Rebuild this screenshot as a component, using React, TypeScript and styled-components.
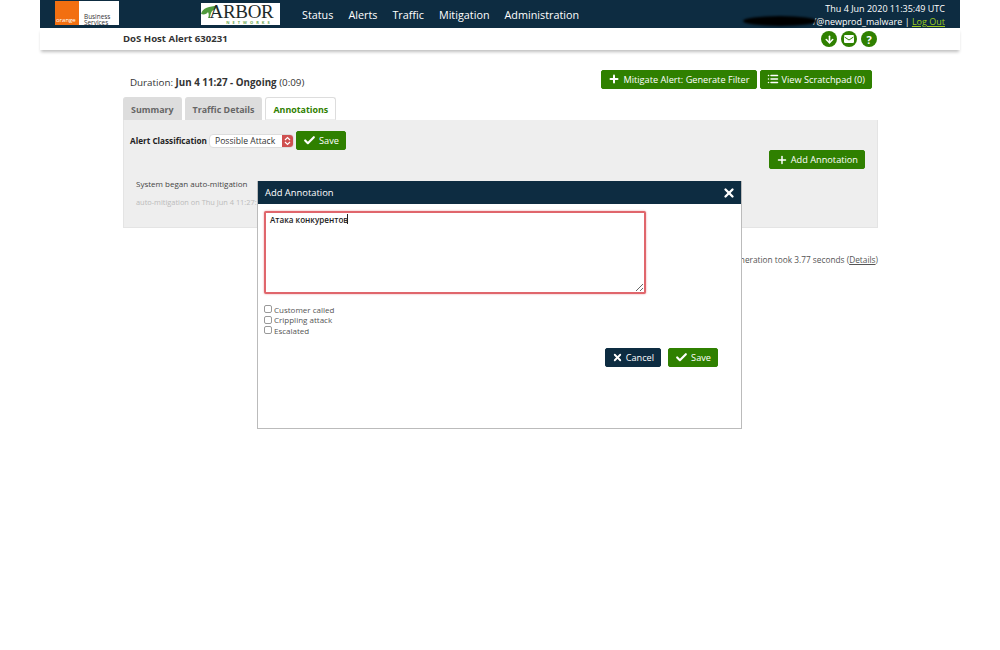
import React from 'react'
import styled, { createGlobalStyle } from 'styled-components'
import { ArrowDown, Check, List, Plus, X } from 'lucide-react'

const GlobalStyle = createGlobalStyle`
	html, body {
		margin: 0;
		padding: 0;
		background: #fff;
		font-family: "Open Sans", "Noto Sans", sans-serif;
		color: #333;
	}
`

const navItems = ['Status', 'Alerts', 'Traffic', 'Mitigation', 'Administration']
const tabs = ['Summary', 'Traffic Details', 'Annotations']
const flags = ['Customer called', 'Crippling attack', 'Escalated']

const App: React.FC = () => {
	return (
		<Page>
			<GlobalStyle />
			<Header>
				<OrangeLogo>
					<OrangeSquare>orange</OrangeSquare>
					<BusinessText>Business<br />Services</BusinessText>
				</OrangeLogo>
				<ArborLogo>
					<ArborName>
						<svg width="18" height="13" viewBox="0 0 18 13">
							<path d="M17 1C10 1 2 3 1 9c3 1 6 0 7-2 1 2 1 4 0 6h2c0-3 1-5 2-7 3-1 4-3 5-5z" fill="#4f9a3c" />
						</svg>
						ARBOR
					</ArborName>
					<ArborSub>NETWORKS</ArborSub>
				</ArborLogo>
				<Nav>
					{navItems.map(item => <NavItem key={item}>{item}</NavItem>)}
				</Nav>
				<UserInfo>
					<div>Thu 4 Jun 2020 11:35:49 UTC</div>
					<UserLine>
						<Redacted />
						<span>/@newprod_malware&nbsp;|&nbsp;</span>
						<LogOut>Log Out</LogOut>
					</UserLine>
				</UserInfo>
			</Header>
			<SubHeader>
				<PageTitle>DoS Host Alert 630231</PageTitle>
				<RoundIcons>
					<RoundIcon><ArrowDown size={11} strokeWidth={3.5} /></RoundIcon>
					<RoundIcon>
						<svg width="10" height="8" viewBox="0 0 10 8">
							<rect width="10" height="8" rx="1.2" fill="#fff" />
							<path d="M0.5 2l4.5 3 4.5-3" fill="none" stroke="#2f8000" strokeWidth="1" />
						</svg>
					</RoundIcon>
					<RoundIcon><b>?</b></RoundIcon>
				</RoundIcons>
			</SubHeader>
			<Content>
				<TopRow>
					<Duration>Duration: <b>Jun 4 11:27 - Ongoing</b> (0:09)</Duration>
					<TopActions>
						<GreenButton><Plus size={12} strokeWidth={4} />Mitigate Alert: Generate Filter</GreenButton>
						<GreenButton><List size={12} strokeWidth={3} />View Scratchpad (0)</GreenButton>
					</TopActions>
				</TopRow>
				<Tabs>
					{tabs.map(tab => <Tab key={tab} $active={tab === 'Annotations'}>{tab}</Tab>)}
				</Tabs>
				<Panel>
					<ClassRow>
						<ClassLabel>Alert Classification</ClassLabel>
						<FakeSelect>
							Possible Attack
							<SelectArrows>
								<svg width="7" height="10" viewBox="0 0 7 10" fill="none" stroke="#fff" strokeWidth="1.2">
									<path d="M1 4l2.5-2.5L6 4M1 6l2.5 2.5L6 6" />
								</svg>
							</SelectArrows>
						</FakeSelect>
						<GreenButton><Check size={13} strokeWidth={4} />Save</GreenButton>
					</ClassRow>
					<AddRow>
						<GreenButton><Plus size={12} strokeWidth={3} />Add Annotation</GreenButton>
					</AddRow>
					<NoteText>System began auto-mitigation</NoteText>
					<NoteMeta>auto-mitigation on Thu Jun 4 11:27:13 2020</NoteMeta>
				</Panel>
				<Footnote>Page generation took 3.77 seconds (<u>Details</u>)</Footnote>
			</Content>
			<Modal>
				<ModalHeader>
					Add Annotation
					<X size={14} strokeWidth={4} color="#fff" />
				</ModalHeader>
				<ModalBody>
					<NoteField>
						<NoteInput defaultValue="Атака конкурентов" />
						<Caret />
					</NoteField>
					<Flags>
						{flags.map(flag => (
							<FlagRow key={flag}>
								<FlagBox type="checkbox" />
								{flag}
							</FlagRow>
						))}
					</Flags>
					<ModalActions>
						<NavyButton><X size={11} strokeWidth={4} />Cancel</NavyButton>
						<GreenButton><Check size={13} strokeWidth={4} />Save</GreenButton>
					</ModalActions>
				</ModalBody>
			</Modal>
		</Page>
	)
}

const Page = styled.div`
	position: relative;
	width: 1000px;
	height: 650px;
	overflow: hidden;
	padding: 0 40px;
	box-sizing: border-box;
`

const Header = styled.div`
	display: flex;
	align-items: flex-start;
	height: 28px;
	background: #0d2c41;
	padding-left: 15px;
	padding-right: 15px;
	color: #fff;
`

const OrangeLogo = styled.div`
	display: flex;
	width: 64px;
	height: 24px;
	margin-top: 1px;
	background: #fff;
`

const OrangeSquare = styled.div`
	width: 24px;
	background: #f26f10;
	color: #fff;
	font-size: 6px;
	line-height: 6px;
	padding: 16px 0 0 1px;
	box-sizing: border-box;
`

const BusinessText = styled.div`
	margin: 13px 0 0 5px;
	color: #333;
	font-size: 6.4px;
	line-height: 6px;
	white-space: nowrap;
`

const ArborLogo = styled.div`
	width: 79px;
	height: 22px;
	margin: 3px 0 0 82px;
	background: #fff;
	text-align: center;
`

const ArborName = styled.div`
	display: flex;
	justify-content: center;
	align-items: center;
	height: 17px;
	font-family: "Liberation Serif", serif;
	font-size: 19px;
	letter-spacing: -0.3px;
	line-height: 17px;
	color: #1d2a2a;
	svg {
		margin-right: -8px;
		margin-left: -8px;
	}
`

const ArborSub = styled.div`
	font-size: 4px;
	font-weight: 700;
	line-height: 5px;
	letter-spacing: 3px;
	padding-left: 18px;
	color: #6aa84f;
`

const Nav = styled.div`
	display: flex;
	gap: 15px;
	margin-left: 22px;
	line-height: 29px;
	font-size: 10.8px;
	font-weight: 500;
`

const NavItem = styled.div`
	color: #fff;
`

const UserInfo = styled.div`
	margin-left: auto;
	font-size: 9px;
	line-height: 13px;
	padding-top: 2px;
	text-align: right;
	white-space: nowrap;
`

const UserLine = styled.div`
	position: relative;
	display: flex;
	justify-content: flex-end;
`

const Redacted = styled.div`
	position: absolute;
	right: 128px;
	top: 1px;
	width: 74px;
	height: 10px;
	border-radius: 50%;
	background: #000;
	filter: blur(1px);
`

const LogOut = styled.span`
	color: #9ecb1e;
	text-decoration: underline;
`

const SubHeader = styled.div`
	display: flex;
	justify-content: space-between;
	height: 22px;
	padding: 0 83px 0 83px;
	background: #fff;
	box-shadow: 0 3px 3px -1px rgba(0, 0, 0, 0.25);
`

const PageTitle = styled.div`
	font-size: 9.6px;
	font-weight: 700;
	line-height: 21px;
	color: #333;
`

const RoundIcons = styled.div`
	display: flex;
	gap: 4px;
	padding-top: 3px;
`

const RoundIcon = styled.div`
	display: flex;
	align-items: center;
	justify-content: center;
	width: 16px;
	height: 16px;
	border-radius: 50%;
	background: #2f8000;
	color: #fff;
	font-size: 11px;
`

const Content = styled.div`
	padding: 19px 82px 0 83px;
`

const TopRow = styled.div`
	display: flex;
	justify-content: space-between;
	align-items: center;
	height: 20px;
	padding-left: 7px;
`

const Duration = styled.div`
	font-size: 9.8px;
	padding-top: 7px;
	color: #333;
`

const TopActions = styled.div`
	display: flex;
	gap: 3px;
	margin-right: 6px;
`

const GreenButton = styled.button`
	display: inline-flex;
	align-items: center;
	gap: 3px;
	height: 19px;
	padding: 0 6px;
	border: 1px solid #2f8000;
	border-radius: 2px;
	background: #2f8000;
	color: #fff;
	font-family: inherit;
	font-size: 9.2px;
	font-weight: 400;
	white-space: nowrap;
`

const NavyButton = styled(GreenButton)`
	background: #0d2c41;
	border-color: #0d2c41;
`

const Tabs = styled.div`
	display: flex;
	gap: 3px;
	margin-top: 8px;
`

const Tab = styled.div<{ $active?: boolean }>`
	height: 23px;
	padding: 0 7px;
	box-sizing: border-box;
	border: 1px solid #ddd;
	border-bottom: ${p => (p.$active ? '1px solid #eee' : 'none')};
	border-radius: 3px 3px 0 0;
	background: ${p => (p.$active ? '#fff' : '#ddd')};
	color: ${p => (p.$active ? '#2f8000' : '#666')};
	font-size: 8.9px;
	font-weight: 700;
	line-height: 24px;
`

const Panel = styled.div`
	height: 108px;
	box-sizing: border-box;
	padding: 11px 12px 0 6px;
	background: #eee;
	border: 1px solid #e4e4e4;
	border-top: none;
`

const ClassRow = styled.div`
	display: flex;
	align-items: center;
	gap: 2px;
`

const ClassLabel = styled.div`
	font-size: 8.2px;
	font-weight: 700;
	color: #222;
`

const FakeSelect = styled.div`
	display: flex;
	align-items: center;
	justify-content: space-between;
	width: 85px;
	height: 14px;
	box-sizing: border-box;
	padding-left: 5px;
	border-radius: 4px;
	background: #fff;
	border: 1px solid #ddd;
	font-size: 8.6px;
	color: #333;
	overflow: hidden;
`

const SelectArrows = styled.div`
	display: flex;
	align-items: center;
	justify-content: center;
	width: 11px;
	height: 14px;
	background: #cf5050;
`

const AddRow = styled.div`
	display: flex;
	justify-content: flex-end;
	margin-top: 0;
`

const NoteText = styled.div`
	margin: 9px 0 0 6px;
	font-size: 8px;
	color: #444;
`

const NoteMeta = styled.div`
	margin: 8px 0 0 6px;
	font-size: 7.4px;
	color: #bbb;
`

const Footnote = styled.div`
	margin-top: 26px;
	text-align: right;
	font-size: 8.3px;
	color: #555;
`

const Modal = styled.div`
	position: absolute;
	left: 257px;
	top: 181px;
	width: 485px;
	height: 248px;
	box-sizing: border-box;
	background: #fff;
	border: 1px solid #bbb;
	border-top: none;
`

const ModalHeader = styled.div`
	display: flex;
	align-items: center;
	justify-content: space-between;
	height: 23px;
	padding: 0 5px 0 7px;
	background: #0d2c41;
	color: #fff;
	font-size: 9.4px;
	font-weight: 500;
`

const ModalBody = styled.div`
	padding: 7px 0 0 6px;
`

const NoteField = styled.div`
	position: relative;
	width: 382px;
`

const NoteInput = styled.textarea`
	display: block;
	width: 382px;
	height: 83px;
	box-sizing: border-box;
	margin: 0;
	padding: 1px 4px;
	border: 2px solid #e0666c;
	border-radius: 2px;
	box-shadow: 0 0 2px rgba(224, 102, 108, 0.7);
	outline: none;
	font-family: inherit;
	font-size: 8.1px;
	font-weight: 600;
	color: #222;
`

const Caret = styled.div`
	position: absolute;
	left: 83px;
	top: 3px;
	width: 1px;
	height: 10px;
	background: #222;
`

const Flags = styled.div`
	margin-top: 10px;
`

const FlagRow = styled.label`
	display: flex;
	align-items: center;
	gap: 2px;
	height: 10.5px;
	font-size: 8px;
	color: #555;
`

const FlagBox = styled.input`
	appearance: none;
	width: 8px;
	height: 8px;
	margin: 0;
	box-sizing: border-box;
	border: 1px solid #999;
	border-radius: 2px;
	background: #fff;
`

const ModalActions = styled.div`
	display: flex;
	justify-content: flex-end;
	gap: 7px;
	margin: 12px 23px 0 0;
`

export default App
